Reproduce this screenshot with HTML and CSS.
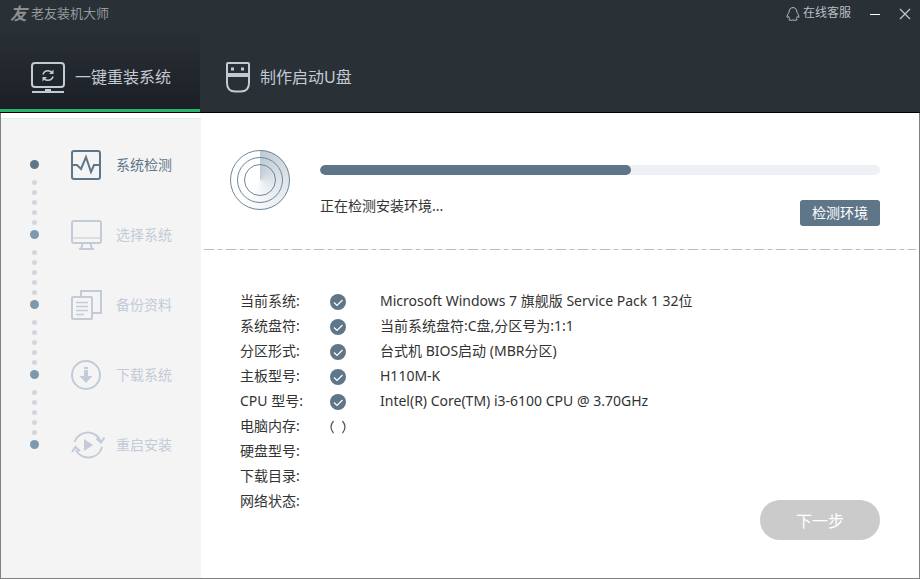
FILE: index.html
```html
<!DOCTYPE html>
<html lang="zh-CN">
<head>
<meta charset="utf-8">
<meta name="viewport" content="width=device-width, initial-scale=1">
<title>老友装机大师</title>
<link rel="stylesheet" href="styles.css">
</head>
<body>
<div class="window">
  <header class="header">
    <div class="titlebar">
      <span class="logo" aria-hidden="true">友</span>
      <h1 class="app-name">老友装机大师</h1>
      <a class="support" href="#">
        <svg width="14" height="14" viewBox="0 0 14 14" fill="none" stroke="currentColor"><path d="M3 5.500C3 2.300 4.600.6 7 .6s4 1.700 4 4.900c1.200 1.500 2 3.200 2 4.800-.6.400-1.200-.2-1.700-.8-.2.900-.6 1.600-1.200 2.200.8.400 1 .8.700 1.300-1.300.5-2.700.4-3.800-.2-1.100.6-2.500.7-3.800.2-.3-.5-.1-.9.700-1.300-.6-.6-1-1.300-1.200-2.200-.5.6-1.100 1.200-1.700.8 0-1.600.8-3.300 2-4.800z"/></svg>
        <span>在线客服</span>
      </a>
      <button class="win-btn" type="button" aria-label="最小化"><svg width="12" height="12" viewBox="0 0 12 12" stroke="#fff"><path d="M1 6.500h10"/></svg></button>
      <button class="win-btn" type="button" aria-label="关闭"><svg width="12" height="12" viewBox="0 0 12 12" stroke="#c4c9ce" stroke-width="1.200"><path d="M1 1l10 10M11 1L1 11"/></svg></button>
    </div>
    <nav class="tabs">
      <button class="tab tab-active" type="button">
        <svg width="34" height="32" viewBox="0 0 34 32" fill="none" stroke="currentColor" stroke-width="2"><rect x="1" y="1" width="32" height="24" rx="3"/><path d="M1 30h32"/><path d="M14 28h6"/><path d="M12 12.500c.8-2.500 2.800-3.800 5-3.800 1.800 0 3 .7 4 1.900M22 14.500c-.8 2.500-2.800 3.800-5 3.800-1.800 0-3-.7-4-1.900" stroke-width="1.600"/><path d="M22.500 7.500v4.500H18zM11.500 19.500V15H16z" fill="currentColor" stroke="none"/></svg>
        <span>一键重装系统</span>
      </button>
      <button class="tab" type="button">
        <svg width="24" height="31" viewBox="0 0 24 31" fill="none" stroke="currentColor" stroke-width="2"><path d="M2 1h20q1 0 1 1v19q0 8.500-8.500 8.500h-5Q1 29.500 1 21V2q0-1 1-1z"/><path d="M1 13h22" stroke-width="4"/><path d="M5 7h3M15 7h3" stroke-width="3"/></svg>
        <span>制作启动U盘</span>
      </button>
    </nav>
  </header>
  <div class="body">
    <aside class="sidebar">
      <ol class="steps">
        <li class="step step-current">
          <span class="rail"><i class="node"></i><i class="dot"></i><i class="dot"></i><i class="dot"></i><i class="dot"></i><i class="dot"></i></span>
          <svg class="step-icon" viewBox="0 0 32 30"><rect x="1" y="1" width="28" height="28" rx="2"/><path d="M1 15h5l4 4 5-12 5 15 3-7h6"/></svg>
          <span class="step-label">系统检测</span>
        </li>
        <li class="step">
          <span class="rail"><i class="node"></i><i class="dot"></i><i class="dot"></i><i class="dot"></i><i class="dot"></i><i class="dot"></i></span>
          <svg class="step-icon" viewBox="0 0 32 30"><rect x="1" y="1" width="29" height="22" rx="2"/><path d="M1 18h29" stroke-width="1"/><path d="M11.500 24l-1.500 5M19.500 24l1.500 5M8 29h15"/></svg>
          <span class="step-label">选择系统</span>
        </li>
        <li class="step">
          <span class="rail"><i class="node"></i><i class="dot"></i><i class="dot"></i><i class="dot"></i><i class="dot"></i><i class="dot"></i></span>
          <svg class="step-icon" viewBox="0 0 32 30"><rect x="1" y="7" width="20" height="22" rx="1"/><path d="M10 7V1h20v22h-8"/><path d="M5 12.500h12M5 16.500h12M5 20.500h12M5 24.500h8" stroke-width="1.500"/></svg>
          <span class="step-label">备份资料</span>
        </li>
        <li class="step">
          <span class="rail"><i class="node"></i><i class="dot"></i><i class="dot"></i><i class="dot"></i><i class="dot"></i><i class="dot"></i></span>
          <svg class="step-icon" viewBox="0 0 32 30"><circle cx="15" cy="15" r="14"/><path class="solid" d="M13 7h4v2h-4zM13 10h4v6h4.500L15 23l-6.500-7H13z"/></svg>
          <span class="step-label">下载系统</span>
        </li>
        <li class="step">
          <span class="rail"><i class="node"></i></span>
          <svg class="step-icon step-icon-wide" viewBox="0 0 34 30"><path d="M3.500 12A14 14 0 0 1 30 12M31 17A14 14 0 0 1 5 20M25.500 8.500l4.500 4 3.500-5M1 22l3.500-5 4.500 4"/><path class="solid" d="M13 9l9 6-9 6z"/></svg>
          <span class="step-label">重启安装</span>
        </li>
      </ol>
    </aside>
    <main class="content">
      <section class="scan">
        <svg class="radar" width="60" height="60" viewBox="0 0 60 60" fill="none" stroke="#6f8798" aria-hidden="true">
          <foreignObject x="0" y="0" width="60" height="60"><div class="sweep"></div></foreignObject>
          <circle cx="30" cy="30" r="29.500"/><circle cx="30" cy="30" r="22.500"/><circle cx="30" cy="30" r="15.500"/>
        </svg>
        <div class="scan-info">
          <div class="progress" role="progressbar" aria-label="检测进度" aria-valuenow="56" aria-valuemin="0" aria-valuemax="100"><div class="progress-fill" style="width:55.5%"></div></div>
          <div class="scan-row">
            <p class="status">正在检测安装环境...</p>
            <button class="detect" type="button">检测环境</button>
          </div>
        </div>
      </section>
      <div class="divider"></div>
      <section class="details">
        <table class="info">
          <tbody>
            <tr><th scope="row">当前系统:</th><td class="state"><svg class="check" viewBox="0 0 16 16"><circle cx="8" cy="8" r="8"/><path d="M4 8.500l3 3 5.500-5.500"/></svg></td><td>Microsoft Windows 7 旗舰版 Service Pack 1 32位</td></tr>
            <tr><th scope="row">系统盘符:</th><td class="state"><svg class="check" viewBox="0 0 16 16"><circle cx="8" cy="8" r="8"/><path d="M4 8.500l3 3 5.500-5.500"/></svg></td><td>当前系统盘符:C盘,分区号为:1:1</td></tr>
            <tr><th scope="row">分区形式:</th><td class="state"><svg class="check" viewBox="0 0 16 16"><circle cx="8" cy="8" r="8"/><path d="M4 8.500l3 3 5.500-5.500"/></svg></td><td>台式机 BIOS启动 (MBR分区)</td></tr>
            <tr><th scope="row">主板型号:</th><td class="state"><svg class="check" viewBox="0 0 16 16"><circle cx="8" cy="8" r="8"/><path d="M4 8.500l3 3 5.500-5.500"/></svg></td><td>H110M-K</td></tr>
            <tr><th scope="row">CPU 型号:</th><td class="state"><svg class="check" viewBox="0 0 16 16"><circle cx="8" cy="8" r="8"/><path d="M4 8.500l3 3 5.500-5.500"/></svg></td><td>Intel(R) Core(TM) i3-6100 CPU @ 3.70GHz</td></tr>
            <tr><th scope="row">电脑内存:</th><td class="state"><svg class="spinner" viewBox="0 0 16 16"><path d="M3.500 2q-5 6 0 12M12.500 2q5 6 0 12"/></svg></td><td></td></tr>
            <tr><th scope="row">硬盘型号:</th><td class="state"></td><td></td></tr>
            <tr><th scope="row">下载目录:</th><td class="state"></td><td></td></tr>
            <tr><th scope="row">网络状态:</th><td class="state"></td><td></td></tr>
          </tbody>
        </table>
        <button class="next" type="button">下一步</button>
      </section>
    </main>
  </div>
</div>
</body>
</html>
```

FILE: styles.css
```css
* {
  box-sizing: border-box;
}

body {
  margin: 0;
  font-family: "Noto Sans", "Noto Sans CJK SC", sans-serif;
  font-size: 14px;
  color: #333;
}

button {
  border: 0;
  padding: 0;
  background: none;
  font: inherit;
  color: inherit;
}

svg {
  display: block;
  flex: none;
}

.window {
  display: flex;
  flex-direction: column;
  min-height: 100vh;
}

.header {
  background: #293036;
  border-bottom: 1px solid #000;
}

.titlebar {
  display: flex;
  align-items: center;
  height: 27px;
  padding: 0 9px 0 10px;
  line-height: 16px;
}

.logo {
  width: 21px;
  font-size: 17px;
  font-weight: 700;
  font-style: italic;
  color: #8d8f90;
}

.app-name {
  margin: 0 auto 0 0;
  padding-bottom: 2px;
  font-size: 13px;
  font-weight: 400;
  color: #97999b;
}

.support {
  display: flex;
  align-items: center;
  gap: 3px;
  font-size: 12px;
  color: #b9bec3;
  text-decoration: none;
}

.support span {
  padding-bottom: 2px;
}

.win-btn {
  margin-left: 18px;
}

.tabs {
  display: flex;
}

.tab {
  display: flex;
  align-items: center;
  gap: 10px;
  height: 85px;
  padding: 19px 26px 0;
  border-bottom: 3px solid transparent;
  font-size: 16px;
  color: #c3cad4;
}

.tab span {
  padding-bottom: 4px;
}

.tab-active {
  width: 200px;
  padding: 19px 0 0 31px;
  border-bottom-color: #26b36b;
  background: linear-gradient(#293036, #1c2026);
}

.body {
  display: flex;
  flex: 1;
  border: 1px solid #808080;
  border-top: 0;
  background: #fff;
}

.sidebar {
  width: 200px;
  margin-top: 5px;
  border-top: 1px solid #dcf5ea;
  background: #f4f4f4;
}

.steps {
  margin: 0;
  padding: 11px 0 0 29px;
  list-style: none;
}

.step {
  display: flex;
  height: 70px;
  color: #c3cbd6;
}

.rail {
  display: flex;
  flex-direction: column;
  align-items: center;
  gap: 5px;
  width: 9px;
  margin-right: 32px;
  padding-top: 30px;
}

.node {
  flex: none;
  width: 9px;
  height: 9px;
  margin-bottom: 6px;
  border-radius: 50%;
  background: #7e99ae;
}

.dot {
  flex: none;
  width: 5px;
  height: 5px;
  border-radius: 50%;
  background: #d0d6dc;
}

.step-icon {
  width: 32px;
  height: 30px;
  margin: 20px 13px 0 0;
  fill: none;
  stroke: currentColor;
  stroke-width: 2;
}

.step-icon-wide {
  width: 34px;
  margin-right: 11px;
}

.solid {
  fill: currentColor;
  stroke: none;
}

.step-label {
  line-height: 70px;
}

.step-current,
.step-current .step-label {
  color: #5f7688;
}

.step-current .node {
  background: #5f7688;
}

.content {
  display: flex;
  flex: 1;
  flex-direction: column;
}

.scan {
  display: flex;
  gap: 30px;
  padding: 37px 39px 23px 29px;
}

.sweep {
  width: 60px;
  height: 60px;
  border-radius: 50%;
  background: conic-gradient(#c0cbd4, #dfe5ea 25%, #fff 60%);
}

.scan-info {
  flex: 1;
  padding-top: 15px;
}

.progress {
  height: 10px;
  overflow: hidden;
  border-radius: 5px;
  background: #edf1f5;
}

.progress-fill {
  height: 100%;
  border-radius: 5px;
  background: #5f7588;
}

.scan-row {
  display: flex;
  justify-content: space-between;
  align-items: flex-start;
  padding-top: 25px;
}

.status {
  margin: 0;
  line-height: 12px;
}

.detect {
  width: 80px;
  height: 26px;
  padding-bottom: 2px;
  border-radius: 3px;
  background: #5f7588;
  color: #fff;
}

.divider {
  height: 1px;
  margin: 0 3px;
  background: repeating-linear-gradient(90deg, #bcbcbc 0 10px, #eee 10px 14px, #bcbcbc 14px 18px, #eee 18px 22px);
}

.details {
  display: flex;
  flex: 1;
  justify-content: space-between;
  align-items: flex-start;
  padding: 38px 39px 38px;
}

.info {
  border-collapse: collapse;
  line-height: 25px;
}

.info th,
.info td {
  height: 25px;
  padding: 0;
  font-weight: 400;
  text-align: left;
}

.info th {
  width: 90px;
}

.info .state {
  width: 50px;
  padding-top: 2px;
}

.check,
.spinner {
  width: 16px;
  height: 16px;
  fill: #5f7588;
}

.check path,
.spinner path {
  fill: none;
  stroke: #fff;
  stroke-width: 1.2;
}

.spinner path {
  stroke: #555;
}

.next {
  align-self: flex-end;
  width: 120px;
  height: 40px;
  border-radius: 20px;
  background: #cbcbcb;
  font-size: 16px;
  color: #fff;
}
```
